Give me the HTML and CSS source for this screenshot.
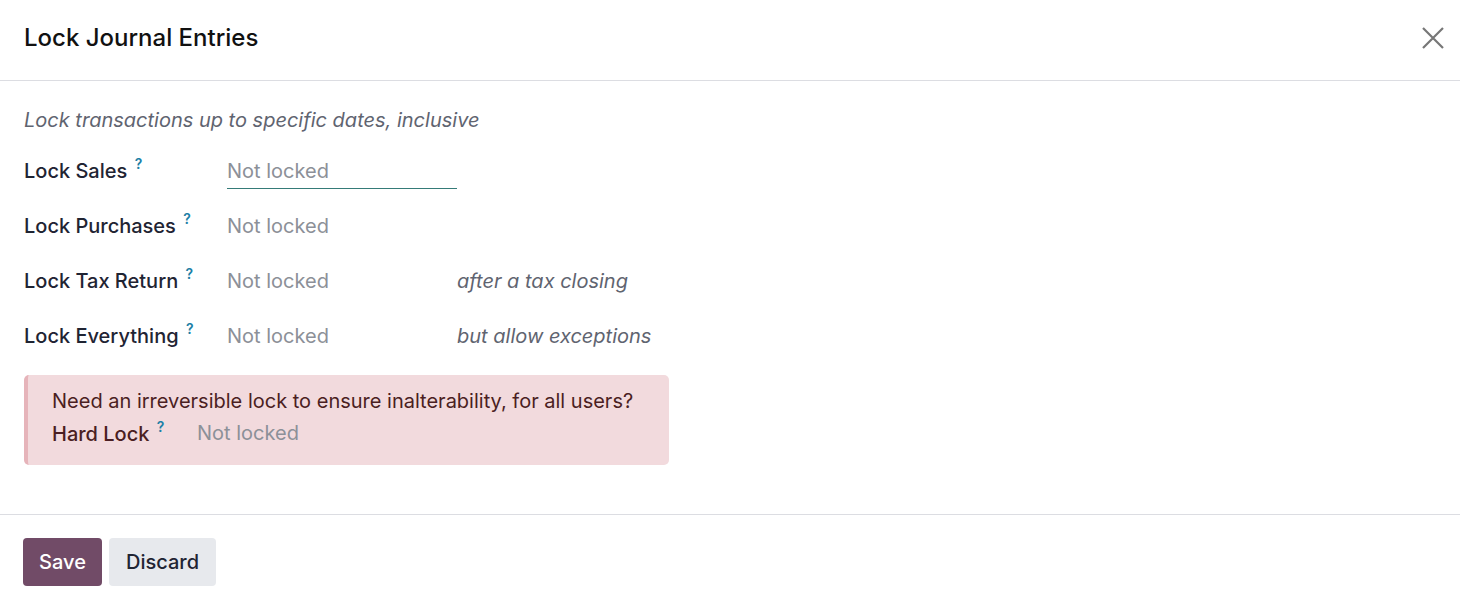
FILE: index.html
```html
<!DOCTYPE html>
<html lang="en">

<head>
    <meta charset="UTF-8">
    <meta name="viewport" content="width=device-width, initial-scale=1.0">
    <title>Lock Journal Entries</title>
    <link rel="stylesheet" href="styles.css">
</head>

<body>
    <div class="modal">
        <header class="modal-header">
            <h4 class="modal-title">Lock Journal Entries</h4>
            <button class="btn-close" aria-label="Close">
                <svg width="24" height="24" viewBox="0 0 24 24">
                    <path d="M2 2 L22 22 M22 2 L2 22" stroke="#777" stroke-width="2.2" fill="none" />
                </svg>
            </button>
        </header>

        <main class="modal-body">
            <p class="hint">Lock transactions up to specific dates, inclusive</p>

            <div class="field-row">
                <label class="field-label">Lock Sales <sup>?</sup></label>
                <div class="field-value editing">Not locked</div>
            </div>
            <div class="field-row">
                <label class="field-label">Lock Purchases <sup>?</sup></label>
                <div class="field-value">Not locked</div>
            </div>
            <div class="field-row">
                <label class="field-label">Lock Tax Return <sup>?</sup></label>
                <div class="field-value">Not locked</div>
                <span class="field-note">after a tax closing</span>
            </div>
            <div class="field-row">
                <label class="field-label">Lock Everything <sup>?</sup></label>
                <div class="field-value">Not locked</div>
                <span class="field-note">but allow exceptions</span>
            </div>

            <div class="alert">
                <div>Need an irreversible lock to ensure inalterability, for all users?</div>
                <div class="alert-row">
                    <label class="field-label">Hard Lock <sup>?</sup></label>
                    <div class="field-value">Not locked</div>
                </div>
            </div>
        </main>

        <footer class="modal-footer">
            <button class="btn btn-primary">Save</button>
            <button class="btn btn-secondary">Discard</button>
        </footer>
    </div>
</body>

</html>
```

FILE: styles.css
```css
* {
    margin: 0;
    padding: 0;
    box-sizing: border-box;
}

body {
    font-family: Inter, "Noto Sans", sans-serif;
    font-size: 20px;
    line-height: 24px;
    color: #1f2433;
    background: #fff;
}

.modal-header {
    height: 81px;
    display: flex;
    align-items: center;
    justify-content: space-between;
    padding: 0 15px 4px 24px;
    border-bottom: 1px solid #dcdde2;
}

.modal-title {
    font-size: 24px;
    font-weight: 500;
    color: #111;
}

.btn-close {
    border: 0;
    background: none;
    display: flex;
}

.modal-body {
    padding: 27px 24px 49px;
}

.hint {
    font-style: italic;
    color: #5f6470;
    margin-bottom: 11px;
}

.field-row {
    display: flex;
    align-items: center;
    height: 55px;
}

.field-label {
    width: 203px;
    font-weight: 500;
}

.field-label sup {
    color: #1d7fa6;
    font-size: 14px;
    font-weight: 600;
    line-height: 0;
    vertical-align: 9px;
    margin-left: 2px;
}

.field-value {
    width: 230px;
    color: #8c9098;
    padding: 6px 0 5px;
    border-bottom: 1px solid transparent;
}

.field-value.editing {
    border-bottom-color: #357b78;
}

.field-note {
    font-style: italic;
    color: #5f6470;
}

.alert {
    margin-top: 12px;
    width: 645px;
    background: #f2dadd;
    border-left: 4px solid #e6b4ba;
    border-radius: 5px;
    color: #4b1e22;
    padding: 10px 24px 15px 24px;
    line-height: 32px;
}

.alert-row {
    display: flex;
    align-items: center;
}

.alert-row .field-label {
    width: 145px;
}

.alert-row .field-value {
    padding: 0;
    line-height: 32px;
}

.modal-footer {
    border-top: 1px solid #dcdde2;
    padding: 23px 23px;
    display: flex;
    gap: 7px;
}

.btn {
    border: 0;
    border-radius: 4px;
    font-family: Inter, "Noto Sans", sans-serif;
    font-size: 20px;
    font-weight: 500;
    height: 48px;
    padding: 0 16px;
}

.btn-primary {
    background: #714b67;
    color: #fff;
    width: 79px;
}

.btn-secondary {
    background: #e7e9ed;
    color: #1f2433;
    width: 107px;
}
```
